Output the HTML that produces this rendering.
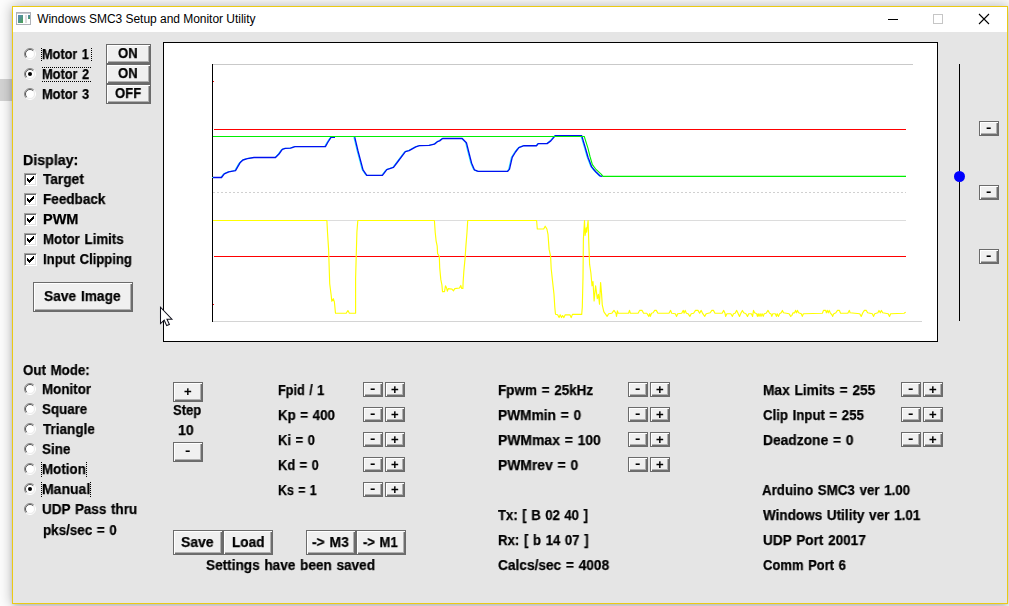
<!DOCTYPE html>
<html><head><meta charset="utf-8"><title>Windows SMC3 Setup and Monitor Utility</title>
<style>
html,body{margin:0;padding:0}
body{width:1009px;height:606px;overflow:hidden;position:relative;background:#fdfdfd;font-family:"Liberation Sans",sans-serif}
#gstrip{position:absolute;left:0;top:79px;width:12px;height:22px;background:#d4d4d4}
#win{position:absolute;left:12px;top:6px;width:994px;height:596px;border:1px solid #ebca14;background:#e5e5e5;box-shadow:0 0 12px 1px rgba(0,0,0,.26),0 3px 5px -1px rgba(0,0,0,.15)}
#tb{position:absolute;left:0;top:0;width:994px;height:25px;background:#fff}
.abs{position:absolute}
.t{position:absolute;transform-origin:0 0;will-change:transform;-webkit-text-stroke:0.25px #000;white-space:nowrap;font-weight:bold;font-size:14.5px;line-height:15px;height:15px;color:#000}
#title{position:absolute;white-space:nowrap;font-size:12px;line-height:16px;color:#000}
.btn{position:absolute;box-sizing:border-box;background:#f0f0f0;border:1px solid #6b6b6b;box-shadow:inset 1px 1px 0 #fff,inset -1px -1px 0 #6e6e6e,inset -2px -2px 0 #b0b0b0}
.btn .t{position:absolute}
.rad{position:absolute;width:12px;height:12px}
.chk{position:absolute;width:13px;height:13px;box-sizing:border-box;background:#fff;border-top:1px solid #a0a0a0;border-left:1px solid #a0a0a0;border-right:1px solid #fff;border-bottom:1px solid #fff;box-shadow:inset 1px 1px 0 #696969,inset -1px -1px 0 #e3e3e3}
.dotv{position:absolute;width:0;border-left:1px dotted #000}
.doth{position:absolute;height:0;border-top:1px dotted #000}
</style></head><body>
<div id="gstrip"></div>
<div id="win"><div id="tb"></div></div>
<!-- everything below is positioned in page coordinates -->
<svg class="abs" style="left:16px;top:12px" width="15" height="13" viewBox="0 0 15 13">
<defs><linearGradient id="ig" x1="0" y1="0" x2="1" y2="1"><stop offset="0" stop-color="#5b86c4"/><stop offset="1" stop-color="#48a24e"/></linearGradient></defs>
<rect x="0.5" y="0.5" width="14" height="12" fill="#fff" stroke="#aeb2b8"/>
<rect x="1" y="1" width="13" height="1" fill="#c9ccd2"/>
<rect x="2" y="3" width="5" height="8" fill="url(#ig)"/>
<rect x="9" y="3" width="2" height="8" fill="#dcdcdc"/>
<rect x="12" y="3" width="2" height="4" fill="url(#ig)"/>
</svg>
<div id="title" style="left:37.20px;top:11px;letter-spacing:-0.030px">Windows SMC3 Setup and Monitor Utility</div>
<svg class="abs" style="left:880px;top:10px" width="120" height="20" viewBox="880 10 120 20">
<rect x="888" y="19" width="10" height="1" fill="#000"/>
<rect x="933.5" y="14.5" width="9" height="9" fill="none" stroke="#c6c6c6"/>
<path d="M979 14 L989 24 M989 14 L979 24" stroke="#000" stroke-width="1.1" fill="none"/>
</svg>

<!-- chart -->
<div class="abs" style="left:163px;top:42px;width:773px;height:298px;border:1px solid #000;background:#fff"></div>
<svg class="abs" style="left:164px;top:43px" width="773" height="298" viewBox="164 43 773 298">
<rect x="213" y="64" width="700" height="1" fill="#c9c9c9"/>
<rect x="213" y="220" width="693" height="1" fill="#dcdcdc"/>
<rect x="213" y="321" width="709" height="1" fill="#d4d4d4"/>
<line x1="213" y1="192.5" x2="906" y2="192.5" stroke="#d0d0d0" stroke-width="1" stroke-dasharray="2 2"/>
<rect x="212" y="64" width="1" height="258" fill="#000"/>
<rect x="213" y="81" width="1" height="1" fill="#f00"/>
<rect x="213" y="304" width="1" height="1" fill="#f00"/>
<rect x="214" y="129" width="692" height="1" fill="#f00"/>
<rect x="214" y="256" width="692" height="1" fill="#f00"/>
<path d="M213.0 177.5L221.5 177.5L224.3 173.8L228.8 171.8L235.5 170.6L240.0 162.8L243.0 160.0L247.4 158.6L254.0 157.5L275.5 157.5L279.0 154.0L282.3 149.4L285.3 148.4L290.6 148.2L295.0 146.6L325.4 146.6L328.0 142.0L331.0 137.4L335.0 137.4M354.7 137.2L358.0 151.0L363.0 169.8L366.8 175.4L382.4 175.4L386.8 169.6L393.5 167.4L397.2 162.5L405.4 151.6L409.1 150.6L415.8 146.9L419.5 145.7L429.2 145.4L434.4 144.2L437.4 141.7L439.6 140.9L442.6 138.5L462.2 138.5L466.4 142.7L469.0 153.0L471.6 163.2L474.5 169.9L478.2 171.4L507.7 171.4L509.5 169.1L512.2 157.3L515.5 152.0L518.9 147.6L524.0 145.7L536.7 145.7L538.2 143.6L547.1 143.6L550.8 140.9L555.3 135.6L581.7 135.6L582.8 139.4L585.5 148.5L588.0 157.3L591.7 166.9L595.5 171.5L599.9 175.8L602.5 176.4" fill="none" stroke="#30e8ff" stroke-width="1" stroke-linejoin="round" transform="translate(-0.9 0)"/>
<path d="M213.0 177.5L221.5 177.5L224.3 173.8L228.8 171.8L235.5 170.6L240.0 162.8L243.0 160.0L247.4 158.6L254.0 157.5L275.5 157.5L279.0 154.0L282.3 149.4L285.3 148.4L290.6 148.2L295.0 146.6L325.4 146.6L328.0 142.0L331.0 137.4L335.0 137.4M354.7 137.2L358.0 151.0L363.0 169.8L366.8 175.4L382.4 175.4L386.8 169.6L393.5 167.4L397.2 162.5L405.4 151.6L409.1 150.6L415.8 146.9L419.5 145.7L429.2 145.4L434.4 144.2L437.4 141.7L439.6 140.9L442.6 138.5L462.2 138.5L466.4 142.7L469.0 153.0L471.6 163.2L474.5 169.9L478.2 171.4L507.7 171.4L509.5 169.1L512.2 157.3L515.5 152.0L518.9 147.6L524.0 145.7L536.7 145.7L538.2 143.6L547.1 143.6L550.8 140.9L555.3 135.6L581.7 135.6L582.8 139.4L585.5 148.5L588.0 157.3L591.7 166.9L595.5 171.5L599.9 175.8L602.5 176.4" fill="none" stroke="#0010f0" stroke-width="1.35" stroke-linejoin="round"/>
<polyline points="213.0,136.5 584.3,136.5 586.0,142.0 588.0,148.3 590.0,156.5 592.4,164.7 596.0,169.5 601.4,174.4 603.1,176.4 906.0,176.4" fill="none" stroke="#00f000" stroke-width="1.1"/>
<polyline points="213.0,220.5 326.9,220.5 327.5,232.2 328.6,249.4 329.7,283.7 331.2,295.5 331.8,301.3 333.3,298.7 334.4,302.0 335.5,313.2 346.2,313.2 347.9,310.5 349.4,313.2 355.6,313.2 355.6,278.3 356.9,232.2 357.8,220.5 434.4,220.5 435.2,232.2 436.1,240.8 437.2,246.1 437.6,253.6 439.3,256.2 439.7,267.6 440.8,279.4 441.9,284.8 442.5,291.6 444.5,291.6 445.5,285.8 446.6,288.0 447.3,291.2 448.3,288.6 452.0,289.1 453.5,290.8 454.8,288.6 459.5,288.0 460.8,285.4 461.6,288.4 462.9,288.4 463.1,282.6 463.8,271.9 465.1,257.9 465.9,246.1 467.0,232.2 467.7,220.5 536.6,220.5 537.3,229.0 543.7,229.0 545.2,226.2 546.9,229.0 548.0,234.3 549.1,249.4 550.6,256.2 551.2,268.7 552.7,282.6 554.0,294.4 554.8,307.3 555.5,314.2 557.6,314.8 559.1,317.6 560.2,314.8 561.5,317.6 562.6,315.5 563.9,317.6 565.2,314.8 569.9,314.8 571.2,317.6 572.4,314.4 581.7,314.4 582.3,307.3 583.0,277.3 583.4,238.6 584.5,220.5 585.1,235.4 586.2,227.9 586.6,232.2 588.1,220.5 588.8,242.9 589.6,264.4 590.9,273.0 592.0,285.8 593.0,281.5 594.1,300.9 595.6,285.8 597.3,298.7 598.4,294.4 599.5,304.1 600.6,282.6 601.6,294.4 602.3,305.2 603.8,311.6 604.8,313.2 607.1,316.4 608.7,313.7 611.9,313.2 614.0,310.4 615.9,313.2 616.5,316.4 617.4,310.9 618.2,313.2 628.5,313.2 629.5,310.4 630.4,313.2 638.1,313.2 639.6,310.4 642.0,310.4 643.6,313.2 646.8,313.2 648.8,316.4 649.6,313.7 650.4,316.4 651.5,313.2 653.1,312.8 654.7,310.4 656.3,310.4 657.9,313.2 669.0,313.2 670.6,310.4 671.7,313.2 675.3,313.7 676.6,316.4 677.7,313.7 681.7,313.2 683.3,310.4 684.0,313.2 685.2,310.4 686.4,313.2 688.0,313.7 689.9,316.4 691.2,313.7 693.6,313.2 695.5,310.4 698.0,310.4 699.6,313.2 701.2,310.4 702.8,313.7 704.7,316.4 706.2,313.7 710.2,312.8 711.8,310.4 713.4,310.4 715.0,313.2 722.1,313.2 723.7,310.4 725.0,313.2 725.6,316.4 726.9,313.7 730.8,313.7 732.4,316.4 733.5,313.7 735.1,313.2 736.7,310.4 738.0,313.2 739.5,316.4 741.1,312.8 742.4,310.4 743.7,312.8 745.9,313.7 747.5,316.4 748.7,313.7 751.4,313.7 752.6,316.4 753.5,310.4 754.6,312.8 756.6,313.7 757.4,316.4 758.2,313.7 759.0,316.4 760.1,313.7 761.0,316.4 762.1,313.7 763.2,316.4 764.2,313.7 766.1,313.2 768.0,310.4 769.6,313.2 770.9,313.7 771.8,316.4 772.8,313.7 775.3,313.7 776.4,316.4 777.2,313.7 778.5,316.4 779.6,313.7 781.2,312.8 782.4,310.4 783.5,312.8 789.1,313.7 790.7,316.4 791.8,315.6 793.1,312.8 794.6,312.8 795.6,310.4 796.5,312.8 797.5,310.4 798.6,312.8 801.3,313.7 802.3,316.4 803.4,313.7 822.4,313.2 823.5,310.4 825.6,310.4 826.4,312.8 827.3,310.4 828.3,312.8 829.2,310.4 830.3,312.8 831.9,314.8 832.7,316.4 833.5,314.0 835.9,312.8 837.5,310.4 839.4,310.4 840.6,313.2 847.8,313.2 849.4,310.4 850.1,312.8 859.7,313.7 861.2,316.4 862.8,312.8 864.4,310.4 866.3,310.4 867.6,312.8 872.3,313.7 873.6,316.4 874.7,313.7 877.9,312.8 879.0,310.4 880.3,312.8 881.4,310.4 882.7,312.8 888.2,313.7 889.5,316.4 890.7,313.7 904.1,313.2 905.7,312.1" fill="none" stroke="#ffff00" stroke-width="1.15" stroke-linejoin="round"/>
</svg>

<!-- slider -->
<div class="abs" style="left:959px;top:64px;width:1px;height:257px;background:#000"></div>
<div class="abs" style="left:954px;top:171px;width:11px;height:11px;border-radius:50%;background:#0000ff"></div>

<div class="btn" style="left:106px;top:44px;width:45px;height:20px"></div>
<div class="btn" style="left:106px;top:64px;width:45px;height:20px"></div>
<div class="btn" style="left:106px;top:84px;width:45px;height:20px"></div>
<div class="btn" style="left:33px;top:282px;width:100px;height:30px"></div>
<div class="btn" style="left:173px;top:530px;width:50px;height:25px"></div>
<div class="btn" style="left:223px;top:530px;width:50px;height:25px"></div>
<div class="btn" style="left:306px;top:530px;width:50px;height:25px"></div>
<div class="btn" style="left:356px;top:530px;width:50px;height:25px"></div>
<div class="btn" style="left:173px;top:382px;width:30px;height:20px"></div>
<div class="t" style="font-size:13px;-webkit-text-stroke:0.12px #000;left:184.25px;top:383.88px">+</div>
<div class="btn" style="left:173px;top:442px;width:30px;height:20px"></div>
<div class="t" style="font-size:12px;-webkit-text-stroke:0;transform:scaleX(1.35);left:185.45px;top:443.80px">-</div>
<div class="btn" style="left:363px;top:382px;width:20px;height:15px"></div>
<div class="t" style="font-size:12px;-webkit-text-stroke:0;transform:scaleX(1.35);left:370.45px;top:381.80px">-</div>
<div class="btn" style="left:385px;top:382px;width:20px;height:15px"></div>
<div class="t" style="font-size:13px;-webkit-text-stroke:0.12px #000;left:391.25px;top:381.88px">+</div>
<div class="btn" style="left:363px;top:407px;width:20px;height:15px"></div>
<div class="t" style="font-size:12px;-webkit-text-stroke:0;transform:scaleX(1.35);left:370.45px;top:406.80px">-</div>
<div class="btn" style="left:385px;top:407px;width:20px;height:15px"></div>
<div class="t" style="font-size:13px;-webkit-text-stroke:0.12px #000;left:391.25px;top:406.88px">+</div>
<div class="btn" style="left:363px;top:432px;width:20px;height:15px"></div>
<div class="t" style="font-size:12px;-webkit-text-stroke:0;transform:scaleX(1.35);left:370.45px;top:431.80px">-</div>
<div class="btn" style="left:385px;top:432px;width:20px;height:15px"></div>
<div class="t" style="font-size:13px;-webkit-text-stroke:0.12px #000;left:391.25px;top:431.88px">+</div>
<div class="btn" style="left:363px;top:457px;width:20px;height:15px"></div>
<div class="t" style="font-size:12px;-webkit-text-stroke:0;transform:scaleX(1.35);left:370.45px;top:456.80px">-</div>
<div class="btn" style="left:385px;top:457px;width:20px;height:15px"></div>
<div class="t" style="font-size:13px;-webkit-text-stroke:0.12px #000;left:391.25px;top:456.88px">+</div>
<div class="btn" style="left:363px;top:482px;width:20px;height:15px"></div>
<div class="t" style="font-size:12px;-webkit-text-stroke:0;transform:scaleX(1.35);left:370.45px;top:481.80px">-</div>
<div class="btn" style="left:385px;top:482px;width:20px;height:15px"></div>
<div class="t" style="font-size:13px;-webkit-text-stroke:0.12px #000;left:391.25px;top:481.88px">+</div>
<div class="btn" style="left:628px;top:382px;width:20px;height:15px"></div>
<div class="t" style="font-size:12px;-webkit-text-stroke:0;transform:scaleX(1.35);left:635.45px;top:381.80px">-</div>
<div class="btn" style="left:650px;top:382px;width:20px;height:15px"></div>
<div class="t" style="font-size:13px;-webkit-text-stroke:0.12px #000;left:656.25px;top:381.88px">+</div>
<div class="btn" style="left:628px;top:407px;width:20px;height:15px"></div>
<div class="t" style="font-size:12px;-webkit-text-stroke:0;transform:scaleX(1.35);left:635.45px;top:406.80px">-</div>
<div class="btn" style="left:650px;top:407px;width:20px;height:15px"></div>
<div class="t" style="font-size:13px;-webkit-text-stroke:0.12px #000;left:656.25px;top:406.88px">+</div>
<div class="btn" style="left:628px;top:432px;width:20px;height:15px"></div>
<div class="t" style="font-size:12px;-webkit-text-stroke:0;transform:scaleX(1.35);left:635.45px;top:431.80px">-</div>
<div class="btn" style="left:650px;top:432px;width:20px;height:15px"></div>
<div class="t" style="font-size:13px;-webkit-text-stroke:0.12px #000;left:656.25px;top:431.88px">+</div>
<div class="btn" style="left:628px;top:457px;width:20px;height:15px"></div>
<div class="t" style="font-size:12px;-webkit-text-stroke:0;transform:scaleX(1.35);left:635.45px;top:456.80px">-</div>
<div class="btn" style="left:650px;top:457px;width:20px;height:15px"></div>
<div class="t" style="font-size:13px;-webkit-text-stroke:0.12px #000;left:656.25px;top:456.88px">+</div>
<div class="btn" style="left:901px;top:382px;width:20px;height:15px"></div>
<div class="t" style="font-size:12px;-webkit-text-stroke:0;transform:scaleX(1.35);left:908.45px;top:381.80px">-</div>
<div class="btn" style="left:923px;top:382px;width:20px;height:15px"></div>
<div class="t" style="font-size:13px;-webkit-text-stroke:0.12px #000;left:929.25px;top:381.88px">+</div>
<div class="btn" style="left:901px;top:407px;width:20px;height:15px"></div>
<div class="t" style="font-size:12px;-webkit-text-stroke:0;transform:scaleX(1.35);left:908.45px;top:406.80px">-</div>
<div class="btn" style="left:923px;top:407px;width:20px;height:15px"></div>
<div class="t" style="font-size:13px;-webkit-text-stroke:0.12px #000;left:929.25px;top:406.88px">+</div>
<div class="btn" style="left:901px;top:432px;width:20px;height:15px"></div>
<div class="t" style="font-size:12px;-webkit-text-stroke:0;transform:scaleX(1.35);left:908.45px;top:431.80px">-</div>
<div class="btn" style="left:923px;top:432px;width:20px;height:15px"></div>
<div class="t" style="font-size:13px;-webkit-text-stroke:0.12px #000;left:929.25px;top:431.88px">+</div>
<div class="btn" style="left:979px;top:121px;width:20px;height:15px"></div>
<div class="t" style="font-size:12px;-webkit-text-stroke:0;transform:scaleX(1.35);left:986.45px;top:120.80px">-</div>
<div class="btn" style="left:979px;top:185px;width:20px;height:15px"></div>
<div class="t" style="font-size:12px;-webkit-text-stroke:0;transform:scaleX(1.35);left:986.45px;top:184.80px">-</div>
<div class="btn" style="left:979px;top:249px;width:20px;height:15px"></div>
<div class="t" style="font-size:12px;-webkit-text-stroke:0;transform:scaleX(1.35);left:986.45px;top:248.80px">-</div>
<svg class="rad" style="left:24px;top:48px" viewBox="0 0 12 12"><circle cx="6" cy="6" r="4.6" fill="#fff"/><path d="M2.1 9.9 A5.5 5.5 0 0 1 9.9 2.1" fill="none" stroke="#8a8a8a" stroke-width="1"/><path d="M2.8 9.2 A4.5 4.5 0 0 1 9.2 2.8" fill="none" stroke="#555" stroke-width="1"/><path d="M9.9 2.1 A5.5 5.5 0 0 1 2.1 9.9" fill="none" stroke="#fff" stroke-width="1"/><path d="M9.2 2.8 A4.5 4.5 0 0 1 2.8 9.2" fill="none" stroke="#ececec" stroke-width="1"/></svg>
<svg class="rad" style="left:24px;top:68px" viewBox="0 0 12 12"><circle cx="6" cy="6" r="4.6" fill="#fff"/><path d="M2.1 9.9 A5.5 5.5 0 0 1 9.9 2.1" fill="none" stroke="#8a8a8a" stroke-width="1"/><path d="M2.8 9.2 A4.5 4.5 0 0 1 9.2 2.8" fill="none" stroke="#555" stroke-width="1"/><path d="M9.9 2.1 A5.5 5.5 0 0 1 2.1 9.9" fill="none" stroke="#fff" stroke-width="1"/><path d="M9.2 2.8 A4.5 4.5 0 0 1 2.8 9.2" fill="none" stroke="#ececec" stroke-width="1"/><circle cx="6" cy="6" r="2" fill="#000"/></svg>
<svg class="rad" style="left:24px;top:88px" viewBox="0 0 12 12"><circle cx="6" cy="6" r="4.6" fill="#fff"/><path d="M2.1 9.9 A5.5 5.5 0 0 1 9.9 2.1" fill="none" stroke="#8a8a8a" stroke-width="1"/><path d="M2.8 9.2 A4.5 4.5 0 0 1 9.2 2.8" fill="none" stroke="#555" stroke-width="1"/><path d="M9.9 2.1 A5.5 5.5 0 0 1 2.1 9.9" fill="none" stroke="#fff" stroke-width="1"/><path d="M9.2 2.8 A4.5 4.5 0 0 1 2.8 9.2" fill="none" stroke="#ececec" stroke-width="1"/></svg>
<svg class="rad" style="left:24px;top:383px" viewBox="0 0 12 12"><circle cx="6" cy="6" r="4.6" fill="#fff"/><path d="M2.1 9.9 A5.5 5.5 0 0 1 9.9 2.1" fill="none" stroke="#8a8a8a" stroke-width="1"/><path d="M2.8 9.2 A4.5 4.5 0 0 1 9.2 2.8" fill="none" stroke="#555" stroke-width="1"/><path d="M9.9 2.1 A5.5 5.5 0 0 1 2.1 9.9" fill="none" stroke="#fff" stroke-width="1"/><path d="M9.2 2.8 A4.5 4.5 0 0 1 2.8 9.2" fill="none" stroke="#ececec" stroke-width="1"/></svg>
<svg class="rad" style="left:24px;top:403px" viewBox="0 0 12 12"><circle cx="6" cy="6" r="4.6" fill="#fff"/><path d="M2.1 9.9 A5.5 5.5 0 0 1 9.9 2.1" fill="none" stroke="#8a8a8a" stroke-width="1"/><path d="M2.8 9.2 A4.5 4.5 0 0 1 9.2 2.8" fill="none" stroke="#555" stroke-width="1"/><path d="M9.9 2.1 A5.5 5.5 0 0 1 2.1 9.9" fill="none" stroke="#fff" stroke-width="1"/><path d="M9.2 2.8 A4.5 4.5 0 0 1 2.8 9.2" fill="none" stroke="#ececec" stroke-width="1"/></svg>
<svg class="rad" style="left:24px;top:423px" viewBox="0 0 12 12"><circle cx="6" cy="6" r="4.6" fill="#fff"/><path d="M2.1 9.9 A5.5 5.5 0 0 1 9.9 2.1" fill="none" stroke="#8a8a8a" stroke-width="1"/><path d="M2.8 9.2 A4.5 4.5 0 0 1 9.2 2.8" fill="none" stroke="#555" stroke-width="1"/><path d="M9.9 2.1 A5.5 5.5 0 0 1 2.1 9.9" fill="none" stroke="#fff" stroke-width="1"/><path d="M9.2 2.8 A4.5 4.5 0 0 1 2.8 9.2" fill="none" stroke="#ececec" stroke-width="1"/></svg>
<svg class="rad" style="left:24px;top:443px" viewBox="0 0 12 12"><circle cx="6" cy="6" r="4.6" fill="#fff"/><path d="M2.1 9.9 A5.5 5.5 0 0 1 9.9 2.1" fill="none" stroke="#8a8a8a" stroke-width="1"/><path d="M2.8 9.2 A4.5 4.5 0 0 1 9.2 2.8" fill="none" stroke="#555" stroke-width="1"/><path d="M9.9 2.1 A5.5 5.5 0 0 1 2.1 9.9" fill="none" stroke="#fff" stroke-width="1"/><path d="M9.2 2.8 A4.5 4.5 0 0 1 2.8 9.2" fill="none" stroke="#ececec" stroke-width="1"/></svg>
<svg class="rad" style="left:24px;top:463px" viewBox="0 0 12 12"><circle cx="6" cy="6" r="4.6" fill="#fff"/><path d="M2.1 9.9 A5.5 5.5 0 0 1 9.9 2.1" fill="none" stroke="#8a8a8a" stroke-width="1"/><path d="M2.8 9.2 A4.5 4.5 0 0 1 9.2 2.8" fill="none" stroke="#555" stroke-width="1"/><path d="M9.9 2.1 A5.5 5.5 0 0 1 2.1 9.9" fill="none" stroke="#fff" stroke-width="1"/><path d="M9.2 2.8 A4.5 4.5 0 0 1 2.8 9.2" fill="none" stroke="#ececec" stroke-width="1"/></svg>
<svg class="rad" style="left:24px;top:483px" viewBox="0 0 12 12"><circle cx="6" cy="6" r="4.6" fill="#fff"/><path d="M2.1 9.9 A5.5 5.5 0 0 1 9.9 2.1" fill="none" stroke="#8a8a8a" stroke-width="1"/><path d="M2.8 9.2 A4.5 4.5 0 0 1 9.2 2.8" fill="none" stroke="#555" stroke-width="1"/><path d="M9.9 2.1 A5.5 5.5 0 0 1 2.1 9.9" fill="none" stroke="#fff" stroke-width="1"/><path d="M9.2 2.8 A4.5 4.5 0 0 1 2.8 9.2" fill="none" stroke="#ececec" stroke-width="1"/><circle cx="6" cy="6" r="2" fill="#000"/></svg>
<svg class="rad" style="left:24px;top:503px" viewBox="0 0 12 12"><circle cx="6" cy="6" r="4.6" fill="#fff"/><path d="M2.1 9.9 A5.5 5.5 0 0 1 9.9 2.1" fill="none" stroke="#8a8a8a" stroke-width="1"/><path d="M2.8 9.2 A4.5 4.5 0 0 1 9.2 2.8" fill="none" stroke="#555" stroke-width="1"/><path d="M9.9 2.1 A5.5 5.5 0 0 1 2.1 9.9" fill="none" stroke="#fff" stroke-width="1"/><path d="M9.2 2.8 A4.5 4.5 0 0 1 2.8 9.2" fill="none" stroke="#ececec" stroke-width="1"/></svg>
<div class="chk" style="left:24px;top:173px"></div>
<svg class="abs" style="left:27px;top:176px" width="7" height="7" viewBox="0 0 7 7" shape-rendering="crispEdges"><path d="M0 2h1v1h1v1h1v-1h1v-1h1v-1h1v-1h1v3h-1v1h-1v1h-1v1h-1v1h-1v-1h-1v-1h-1z" fill="#000"/></svg>
<div class="chk" style="left:24px;top:193px"></div>
<svg class="abs" style="left:27px;top:196px" width="7" height="7" viewBox="0 0 7 7" shape-rendering="crispEdges"><path d="M0 2h1v1h1v1h1v-1h1v-1h1v-1h1v-1h1v3h-1v1h-1v1h-1v1h-1v1h-1v-1h-1v-1h-1z" fill="#000"/></svg>
<div class="chk" style="left:24px;top:213px"></div>
<svg class="abs" style="left:27px;top:216px" width="7" height="7" viewBox="0 0 7 7" shape-rendering="crispEdges"><path d="M0 2h1v1h1v1h1v-1h1v-1h1v-1h1v-1h1v3h-1v1h-1v1h-1v1h-1v1h-1v-1h-1v-1h-1z" fill="#000"/></svg>
<div class="chk" style="left:24px;top:233px"></div>
<svg class="abs" style="left:27px;top:236px" width="7" height="7" viewBox="0 0 7 7" shape-rendering="crispEdges"><path d="M0 2h1v1h1v1h1v-1h1v-1h1v-1h1v-1h1v3h-1v1h-1v1h-1v1h-1v1h-1v-1h-1v-1h-1z" fill="#000"/></svg>
<div class="chk" style="left:24px;top:253px"></div>
<svg class="abs" style="left:27px;top:256px" width="7" height="7" viewBox="0 0 7 7" shape-rendering="crispEdges"><path d="M0 2h1v1h1v1h1v-1h1v-1h1v-1h1v-1h1v3h-1v1h-1v1h-1v1h-1v1h-1v-1h-1v-1h-1z" fill="#000"/></svg>
<div class="dotv" style="left:41px;top:48px;height:13px"></div><div class="dotv" style="left:91px;top:48px;height:13px"></div>
<div class="doth" style="left:42px;top:67px;width:49px"></div><div class="doth" style="left:42px;top:81px;width:49px"></div>
<div class="dotv" style="left:41px;top:462px;height:15px"></div><div class="dotv" style="left:86px;top:462px;height:15px"></div>
<div class="dotv" style="left:41px;top:482px;height:15px"></div><div class="dotv" style="left:90px;top:482px;height:15px"></div>
<div class="t" style="left:42.04px;top:47.00px;letter-spacing:0.000px;word-spacing:1.0px;transform:scaleX(0.8785)">Motor 1</div>
<div class="t" style="left:42.04px;top:67.00px;letter-spacing:0.000px;word-spacing:1.0px;transform:scaleX(0.8842)">Motor 2</div>
<div class="t" style="left:42.04px;top:87.00px;letter-spacing:0.000px;word-spacing:1.0px;transform:scaleX(0.8842)">Motor 3</div>
<div class="t" style="left:22.86px;top:153.00px;letter-spacing:0.000px;word-spacing:0px;transform:scaleX(0.9806)">Display:</div>
<div class="t" style="left:43.30px;top:172.00px;letter-spacing:0.000px;word-spacing:0px;transform:scaleX(0.9434)">Target</div>
<div class="t" style="left:42.80px;top:192.00px;letter-spacing:0.000px;word-spacing:0px;transform:scaleX(0.9333)">Feedback</div>
<div class="t" style="left:42.75px;top:212.00px;letter-spacing:0.000px;word-spacing:0px;transform:scaleX(0.9985)">PWM</div>
<div class="t" style="left:42.81px;top:232.00px;letter-spacing:0.000px;word-spacing:1.0px;transform:scaleX(0.9164)">Motor Limits</div>
<div class="t" style="left:42.82px;top:252.00px;letter-spacing:0.000px;word-spacing:1.0px;transform:scaleX(0.9034)">Input Clipping</div>
<div class="t" style="left:44.33px;top:289.00px;letter-spacing:0.000px;word-spacing:1.0px;transform:scaleX(0.9475)">Save Image</div>
<div class="t" style="left:23.14px;top:363.00px;letter-spacing:0.000px;word-spacing:1.0px;transform:scaleX(0.9183)">Out Mode:</div>
<div class="t" style="left:42.01px;top:382.00px;letter-spacing:0.000px;word-spacing:0px;transform:scaleX(0.9225)">Monitor</div>
<div class="t" style="left:42.24px;top:402.00px;letter-spacing:0.000px;word-spacing:0px;transform:scaleX(0.9202)">Square</div>
<div class="t" style="left:42.70px;top:422.00px;letter-spacing:0.000px;word-spacing:0px;transform:scaleX(0.9321)">Triangle</div>
<div class="t" style="left:42.24px;top:442.00px;letter-spacing:0.000px;word-spacing:0px;transform:scaleX(0.9277)">Sine</div>
<div class="t" style="left:42.01px;top:462.00px;letter-spacing:0.000px;word-spacing:0px;transform:scaleX(0.9217)">Motion</div>
<div class="t" style="left:41.98px;top:482.00px;letter-spacing:0.000px;word-spacing:0px;transform:scaleX(0.9658)">Manual</div>
<div class="t" style="left:42.00px;top:502.00px;letter-spacing:0.000px;word-spacing:1.0px;transform:scaleX(0.9290)">UDP Pass thru</div>
<div class="t" style="left:42.98px;top:523.00px;letter-spacing:0.000px;word-spacing:1.0px;transform:scaleX(0.9240)">pks/sec = 0</div>
<div class="t" style="left:173.15px;top:403.00px;letter-spacing:0.000px;word-spacing:0px;transform:scaleX(0.8984)">Step</div>
<div class="t" style="left:178.27px;top:423.00px;letter-spacing:0.000px;word-spacing:0px;transform:scaleX(0.9763)">10</div>
<div class="t" style="left:181.12px;top:535.00px;letter-spacing:0.000px;word-spacing:0px;transform:scaleX(0.9606)">Save</div>
<div class="t" style="left:231.90px;top:535.00px;letter-spacing:0.000px;word-spacing:0px;transform:scaleX(0.9394)">Load</div>
<div class="t" style="left:312.42px;top:535.00px;letter-spacing:0.000px;word-spacing:1.0px;transform:scaleX(0.9573)">-&gt; M3</div>
<div class="t" style="left:362.75px;top:535.00px;letter-spacing:0.000px;word-spacing:1.0px;transform:scaleX(0.9007)">-&gt; M1</div>
<div class="t" style="left:206.13px;top:558.00px;letter-spacing:0.000px;word-spacing:1.0px;transform:scaleX(0.9374)">Settings have been saved</div>
<div class="t" style="left:278.04px;top:383.00px;letter-spacing:0.000px;word-spacing:1.0px;transform:scaleX(0.8754)">Fpid / 1</div>
<div class="t" style="left:278.01px;top:408.00px;letter-spacing:0.000px;word-spacing:1.0px;transform:scaleX(0.9169)">Kp = 400</div>
<div class="t" style="left:278.03px;top:433.00px;letter-spacing:0.000px;word-spacing:1.0px;transform:scaleX(0.8981)">Ki = 0</div>
<div class="t" style="left:278.03px;top:458.00px;letter-spacing:0.000px;word-spacing:1.0px;transform:scaleX(0.8894)">Kd = 0</div>
<div class="t" style="left:278.06px;top:483.00px;letter-spacing:0.000px;word-spacing:1.0px;transform:scaleX(0.8568)">Ks = 1</div>
<div class="t" style="left:497.60px;top:383.00px;letter-spacing:0.000px;word-spacing:1.0px;transform:scaleX(0.9304)">Fpwm = 25kHz</div>
<div class="t" style="left:497.59px;top:408.00px;letter-spacing:0.000px;word-spacing:1.0px;transform:scaleX(0.9468)">PWMmin = 0</div>
<div class="t" style="left:497.58px;top:433.00px;letter-spacing:0.000px;word-spacing:1.0px;transform:scaleX(0.9594)">PWMmax = 100</div>
<div class="t" style="left:497.58px;top:458.00px;letter-spacing:0.000px;word-spacing:1.0px;transform:scaleX(0.9564)">PWMrev = 0</div>
<div class="t" style="left:498.30px;top:508.00px;letter-spacing:0.000px;word-spacing:1.0px;transform:scaleX(0.9056)">Tx: [ B 02 40 ]</div>
<div class="t" style="left:497.62px;top:533.00px;letter-spacing:0.000px;word-spacing:1.0px;transform:scaleX(0.9125)">Rx: [ b 14 07 ]</div>
<div class="t" style="left:497.83px;top:558.00px;letter-spacing:0.000px;word-spacing:1.0px;transform:scaleX(0.9439)">Calcs/sec = 4008</div>
<div class="t" style="left:762.59px;top:383.00px;letter-spacing:0.000px;word-spacing:1.0px;transform:scaleX(0.9464)">Max Limits = 255</div>
<div class="t" style="left:762.84px;top:408.00px;letter-spacing:0.000px;word-spacing:1.0px;transform:scaleX(0.9121)">Clip Input = 255</div>
<div class="t" style="left:762.59px;top:433.00px;letter-spacing:0.000px;word-spacing:1.0px;transform:scaleX(0.9515)">Deadzone = 0</div>
<div class="t" style="left:762.44px;top:483.00px;letter-spacing:0.000px;word-spacing:1.0px;transform:scaleX(0.9206)">Arduino SMC3 ver 1.00</div>
<div class="t" style="left:762.90px;top:508.00px;letter-spacing:0.000px;word-spacing:1.0px;transform:scaleX(0.9318)">Windows Utility ver 1.01</div>
<div class="t" style="left:762.60px;top:533.00px;letter-spacing:0.000px;word-spacing:1.0px;transform:scaleX(0.9373)">UDP Port 20017</div>
<div class="t" style="left:762.85px;top:558.00px;letter-spacing:0.000px;word-spacing:1.0px;transform:scaleX(0.8975)">Comm Port 6</div>
<div class="t" style="left:118.35px;top:46.00px;letter-spacing:0.000px;word-spacing:0px;transform:scaleX(0.9037)">ON</div>
<div class="t" style="left:118.35px;top:66.00px;letter-spacing:0.000px;word-spacing:0px;transform:scaleX(0.9037)">ON</div>
<div class="t" style="left:115.35px;top:86.00px;letter-spacing:0.000px;word-spacing:0px;transform:scaleX(0.9000)">OFF</div>

<!-- mouse cursor -->
<svg class="abs" style="left:159px;top:305px" width="16" height="24" viewBox="0 0 16 24">
<path d="M1.5 2.2 L1.5 18.6 L5.2 15.2 L7.7 20.6 L10.4 19.5 L8 14.2 L12.9 14.2 Z" fill="#fff" stroke="#10101c" stroke-width="1.05" stroke-linejoin="miter"/>
</svg>
</body></html>
